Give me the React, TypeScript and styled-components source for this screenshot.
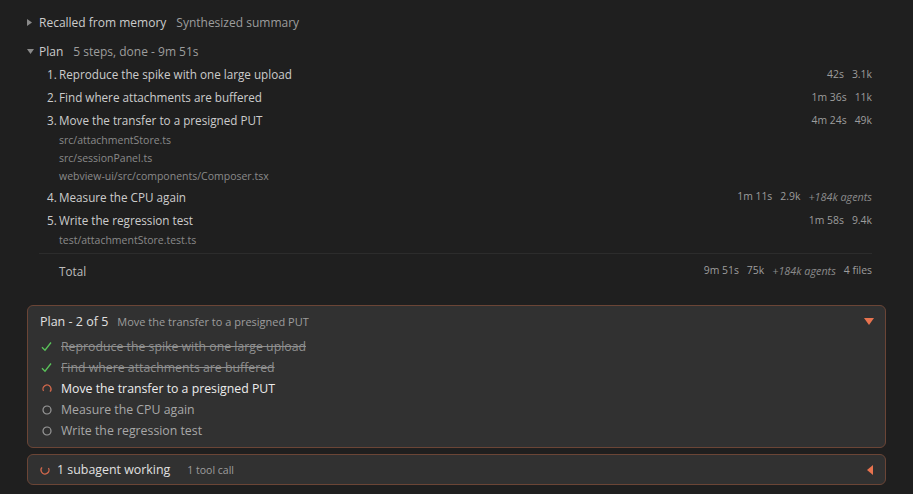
import React from "react";
import styled, { createGlobalStyle } from "styled-components";

const Global = createGlobalStyle`
  html, body { margin: 0; padding: 0; background: #1f1f1f; }
  body { font-family: "Open Sans", "Noto Sans", sans-serif; color: #cccccc; -webkit-font-smoothing: antialiased; }
`;

const Page = styled.div`
  padding: 10px 27px 0 27px;
  display: flex;
  flex-direction: column;
`;

const Disclosure = styled.div<{ $gap?: number }>`
  display: flex;
  align-items: center;
  height: 24px;
  margin-top: ${(p) => p.$gap ?? 0}px;
  font-size: 12px;
`;

const Twisty = styled.span`
  width: 12px;
  display: flex;
  align-items: center;
`;

const Title = styled.span`
  color: #cccccc;
`;

const Muted = styled.span`
  color: #9d9d9d;
  margin-left: 10px;
`;

const Steps = styled.div`
  margin: -1px 14px 0 12px;
  display: flex;
  flex-direction: column;
`;

const StepRow = styled.div`
  display: flex;
  align-items: center;
  height: 23px;
  padding-left: 8px;
  font-size: 11.7px;
  color: #cccccc;
`;

const Num = styled.span`
  width: 12px;
`;

const StepText = styled.span`
  flex: 1;
`;

const Stats = styled.span`
  display: flex;
  gap: 8px;
  font-size: 10.4px;
  color: #9d9d9d;
`;

const Agents = styled.span`
  font-style: italic;
  font-size: 10.8px;
  color: #8a8a8a;
`;

const FileGroup = styled.div`
  display: flex;
  flex-direction: column;
`;

const FileRow = styled.div`
  height: 18px;
  display: flex;
  align-items: center;
  padding-left: 20px;
  font-size: 10.5px;
  color: #8a8a8a;
`;

const Divider = styled.div`
  margin-top: 4px;
  border-top: 1px solid #2c2c2c;
`;

const TotalRow = styled(StepRow)`
  margin-top: 5px;
  padding-left: 20px;
  color: #bdbdbd;
`;

const Box = styled.div<{ $gap: number }>`
  margin-top: ${(p) => p.$gap}px;
  border: 1px solid #6b4536;
  border-radius: 6px;
  background: #313131;
`;

const PlanBox = styled(Box)`
  padding: 5px 11px 6px 12px;
`;

const BoxHeader = styled.div`
  display: flex;
  align-items: center;
  height: 20px;
  font-size: 12.5px;
  color: #e0e0e0;
  margin-bottom: 5px;
`;

const HeaderSub = styled.span`
  flex: 1;
  margin-left: 9px;
  font-size: 11px;
  color: #9d9d9d;
`;

const Item = styled.div<{ $state: "done" | "active" | "todo" }>`
  display: flex;
  align-items: center;
  height: 21px;
  font-size: 12.3px;
  color: ${(p) => (p.$state === "active" ? "#ececec" : p.$state === "done" ? "#8f8f8f" : "#a8a8a8")};
  text-decoration: ${(p) => (p.$state === "done" ? "line-through" : "none")};
`;

const IconCell = styled.span`
  width: 13px;
  margin-right: 8px;
  display: flex;
  justify-content: center;
  align-items: center;
`;

const AgentBox = styled(Box)`
  height: 29px;
  padding: 0 12px;
  display: flex;
  align-items: center;
`;

const AgentText = styled.span`
  margin-left: 7px;
  font-size: 12.4px;
  color: #e0e0e0;
`;

const AgentSub = styled.span`
  flex: 1;
  margin-left: 17px;
  font-size: 10.5px;
  color: #9d9d9d;
`;

const RightTri = () => (
  <svg width="5" height="7" viewBox="0 0 5 7"><path d="M0 0L5 3.5L0 7Z" fill="#8a8a8a" /></svg>
);
const DownTri = () => (
  <svg width="7" height="5" viewBox="0 0 7 5"><path d="M0 0H7L3.5 5Z" fill="#8a8a8a" /></svg>
);
const OrangeDown = () => (
  <svg width="10" height="7" viewBox="0 0 10 7"><path d="M0 0H10L5 7Z" fill="#e8734f" /></svg>
);
const OrangeLeft = () => (
  <svg width="6" height="10" viewBox="0 0 6 10"><path d="M6 0V10L0 5Z" fill="#e8734f" /></svg>
);
const Check = () => (
  <svg width="11" height="11" viewBox="0 0 11 11">
    <path d="M1 6.2L4 9.2L10 1.5" fill="none" stroke="#5ac35a" strokeWidth="1.3" />
  </svg>
);
const Spinner = ({ rot }: { rot: number }) => (
  <svg width="10" height="10" viewBox="0 0 10 10" style={{ transform: `rotate(${rot}deg)` }}>
    <circle cx="5" cy="5" r="4" fill="none" stroke="#c9654a" strokeWidth="1.4" strokeDasharray="17 8.2" />
  </svg>
);
const Pending = () => (
  <svg width="10" height="10" viewBox="0 0 10 10">
    <circle cx="5" cy="5" r="4" fill="none" stroke="#9a9a9a" strokeWidth="1.2" />
  </svg>
);

type Step = { n: number; text: string; stats: string[]; agents?: string; files?: string[] };

const steps: Step[] = [
  { n: 1, text: "Reproduce the spike with one large upload", stats: ["42s", "3.1k"] },
  { n: 2, text: "Find where attachments are buffered", stats: ["1m 36s", "11k"] },
  {
    n: 3,
    text: "Move the transfer to a presigned PUT",
    stats: ["4m 24s", "49k"],
    files: ["src/attachmentStore.ts", "src/sessionPanel.ts", "webview-ui/src/components/Composer.tsx"],
  },
  { n: 4, text: "Measure the CPU again", stats: ["1m 11s", "2.9k"], agents: "+184k agents" },
  { n: 5, text: "Write the regression test", stats: ["1m 58s", "9.4k"], files: ["test/attachmentStore.test.ts"] },
];

const items: { text: string; state: "done" | "active" | "todo" }[] = [
  { text: "Reproduce the spike with one large upload", state: "done" },
  { text: "Find where attachments are buffered", state: "done" },
  { text: "Move the transfer to a presigned PUT", state: "active" },
  { text: "Measure the CPU again", state: "todo" },
  { text: "Write the regression test", state: "todo" },
];

export default function App() {
  return (
    <>
      <Global />
      <Page>
        <Disclosure>
          <Twisty><RightTri /></Twisty>
          <Title>Recalled from memory</Title>
          <Muted>Synthesized summary</Muted>
        </Disclosure>
        <Disclosure $gap={5}>
          <Twisty><DownTri /></Twisty>
          <Title>Plan</Title>
          <Muted>5 steps, done - 9m 51s</Muted>
        </Disclosure>
        <Steps>
          {steps.map((s) => (
            <React.Fragment key={s.n}>
              <StepRow>
                <Num>{s.n}.</Num>
                <StepText>{s.text}</StepText>
                <Stats>
                  {s.stats.map((v) => <span key={v}>{v}</span>)}
                  {s.agents && <Agents>{s.agents}</Agents>}
                </Stats>
              </StepRow>
              {s.files && (
                <FileGroup>
                  {s.files.map((f) => <FileRow key={f}>{f}</FileRow>)}
                </FileGroup>
              )}
            </React.Fragment>
          ))}
          <Divider />
          <TotalRow>
            <StepText>Total</StepText>
            <Stats>
              <span>9m 51s</span>
              <span>75k</span>
              <Agents>+184k agents</Agents>
              <span>4 files</span>
            </Stats>
          </TotalRow>
        </Steps>
        <PlanBox $gap={23}>
          <BoxHeader>
            <span>Plan - 2 of 5</span>
            <HeaderSub>Move the transfer to a presigned PUT</HeaderSub>
            <OrangeDown />
          </BoxHeader>
          {items.map((it) => (
            <Item key={it.text} $state={it.state}>
              <IconCell>
                {it.state === "done" ? <Check /> : it.state === "active" ? <Spinner rot={150} /> : <Pending />}
              </IconCell>
              {it.text}
            </Item>
          ))}
        </PlanBox>
        <AgentBox $gap={6}>
          <Spinner rot={-30} />
          <AgentText>1 subagent working</AgentText>
          <AgentSub>1 tool call</AgentSub>
          <OrangeLeft />
        </AgentBox>
      </Page>
    </>
  );
}
